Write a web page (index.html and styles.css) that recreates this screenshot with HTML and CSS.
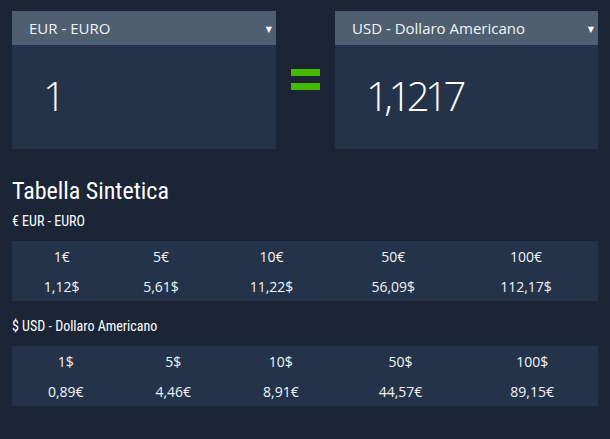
FILE: index.html
```html
<!DOCTYPE html>
<html lang="it">
<head>
<meta charset="utf-8">
<link rel="stylesheet" href="styles.css">
</head>
<body>
<div class="page">
  <div class="converter">
    <div class="panel">
      <div class="select"><span>EUR - EURO</span><span class="arrow">▼</span></div>
      <div class="value">1</div>
    </div>
    <div class="equals"><span class="bar"></span><span class="bar"></span></div>
    <div class="panel">
      <div class="select"><span>USD - Dollaro Americano</span><span class="arrow">▼</span></div>
      <div class="value">1,1217</div>
    </div>
  </div>

  <h2 class="title">Tabella Sintetica</h2>
  <div class="subtitle">€ EUR - EURO</div>
  <table class="grid">
    <tr><td>1€</td><td>5€</td><td>10€</td><td>50€</td><td>100€</td></tr>
    <tr><td>1,12$</td><td>5,61$</td><td>11,22$</td><td>56,09$</td><td>112,17$</td></tr>
  </table>

  <div class="subtitle second">$ USD - Dollaro Americano</div>
  <table class="grid">
    <tr><td>1$</td><td>5$</td><td>10$</td><td>50$</td><td>100$</td></tr>
    <tr><td>0,89€</td><td>4,46€</td><td>8,91€</td><td>44,57€</td><td>89,15€</td></tr>
  </table>
</div>
</body>
</html>
```
FILE: styles.css
```css
html, body {
  margin: 0;
  padding: 0;
  background: #1b2535;
  color: #ffffff;
  font-family: "Open Sans", "DejaVu Sans", sans-serif;
}
.page {
  padding: 11px 12px 0 12px;
}
.converter {
  display: flex;
  align-items: stretch;
}
.panel {
  width: 264px;
  background: #243349;
  height: 138px;
  display: flex;
  flex-direction: column;
}
.panel:last-child {
  width: 263px;
}
.select {
  height: 34px;
  background: #4f5e70;
  display: flex;
  align-items: center;
  justify-content: space-between;
  padding: 0 4px 0 17px;
  font-size: 15px;
  color: #f2f4f7;
}
.arrow {
  font-size: 8px;
  color: #fff;
}
.value {
  flex: 1;
  display: flex;
  align-items: center;
  padding-left: 31px;
  font-size: 40px;
  font-weight: 300;
  letter-spacing: -4.5px;
  padding-bottom: 4px;
}
.equals {
  width: 59px;
  display: flex;
  flex-direction: column;
  align-items: center;
  padding-top: 58px;
  gap: 7px;
}
.bar {
  display: block;
  width: 29px;
  height: 7px;
  background: #44bb00;
}
.title {
  margin: 28px 0 0 0;
  font-family: "Roboto Condensed", "DejaVu Sans Condensed", Roboto, sans-serif;
  font-weight: 400;
  font-size: 24px;
  line-height: 28px;
}
.subtitle {
  font-family: "Roboto Condensed", "DejaVu Sans Condensed", Roboto, sans-serif;
  font-size: 14px;
  line-height: 17px;
  margin-top: 8px;
}
.grid + .subtitle.second {
  margin-top: 17px;
}
.grid {
  width: 586px;
  margin-top: 11px;
  background: #243349;
  border-collapse: collapse;
  font-size: 14px;
  color: #f2f4f7;
}
.grid td {
  text-align: center;
  height: 30px;
  padding: 0;
}
```
